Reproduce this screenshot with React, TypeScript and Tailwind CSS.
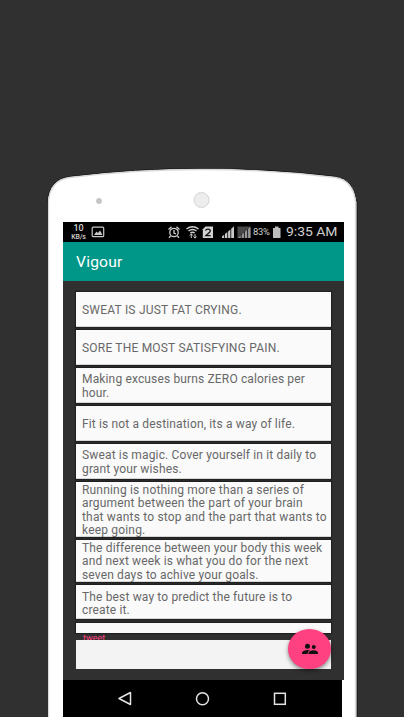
import React from "react";

type Quote = { lines: string[]; box: string };

const quotes: Quote[] = [
  { lines: ["SWEAT IS JUST FAT CRYING."], box: "h-[35px] mb-[3px] pt-[4px] tracking-[0.22px]" },
  { lines: ["SORE THE MOST SATISFYING PAIN."], box: "h-[35px] mb-[3px] pt-[4px] tracking-[0.2px]" },
  { lines: ["Making excuses burns ZERO calories per", "hour."], box: "h-[35px] mb-[3px] pt-[3px] tracking-[0.15px]" },
  { lines: ["Fit is not a destination, its a way of life."], box: "h-[35px] mb-[3px] pt-[4px] tracking-[0.15px]" },
  { lines: ["Sweat is magic. Cover yourself in it daily to", "grant your wishes."], box: "h-[35px] mb-[3px] pt-[3px] tracking-[0.15px]" },
  {
    lines: [
      "Running is nothing more than a series of",
      "argument between the part of your brain",
      "that wants to stop and the part that wants to",
      "keep going.",
    ],
    box: "h-[55px] mb-[3px] pt-[3px] tracking-[0.18px]",
  },
  {
    lines: [
      "The difference between your body this week",
      "and next week is what you do for the next",
      "seven days to achive your goals.",
    ],
    box: "h-[42px] mb-[3px] pt-[3px] tracking-[0.15px]",
  },
  { lines: ["The best way to predict the future is to", "create it."], box: "h-[34px] mb-[4px] pt-[5px] tracking-[0.15px]" },
];

function PhoneShell() {
  return (
    <svg className="absolute left-0 top-0" width="404" height="717" viewBox="0 0 404 717">
      <path d="M47.5 720V202Q49 179 70 176.500Q135 168.500 202 168.500Q269 168.500 335 176.500Q354 179 357 202V720" fill="#fff" stroke="#111" strokeWidth="1" />
      <path d="M48.500 720V202Q50 180 70 177.500Q135 169.500 202 169.500Q269 169.500 335 177.500Q353 180 355.500 202V720" fill="#fff" stroke="#d9d9d9" strokeWidth="1.300" />
      <circle cx="99" cy="201" r="2.900" fill="#c6c6c6" />
      <circle cx="201.500" cy="200" r="7.500" fill="#ededed" stroke="#d4d4d4" />
    </svg>
  );
}

function StatusBar() {
  return (
    <div className="relative flex h-[20px] w-[281px] bg-black text-[#d0d0d0]">
      <div className="ml-[8px] flex w-[15px] flex-col items-center pt-[2px]">
        <span className="text-[9px] leading-[9px] font-medium">10</span>
        <span className="whitespace-nowrap text-[7px] font-medium leading-[8px] tracking-[-0.2px]">KB/s</span>
      </div>
      <svg className="absolute left-0 top-0" width="281" height="20" viewBox="63 222 281 20">
        <rect x="92.200" y="227.200" width="11.500" height="9.500" rx="1" fill="none" stroke="#c8c8c8" strokeWidth="1.200" />
        <path d="M94 235l2.500-3.500 1.500 1.500 2-2.500 2.500 4.500z" fill="#c8c8c8" />
        <g fill="none" stroke="#cfcfcf" strokeWidth="1.300">
          <circle cx="174" cy="232.500" r="4.200" />
          <path d="M174 230v3l2 1M168.500 229.500l3-2.700M179.500 229.500l-3-2.700M170.500 236l-1.500 1.700M177.500 236l1.500 1.700" />
          <path d="M186.500 229Q192.500 224.500 198.500 229M188.500 231Q192.500 228 196.500 231M190.300 233Q192.500 231.500 194.700 233" strokeWidth="1.500" />
          <path d="M191.300 238v-4m-1.500 1.500l1.500-1.700 1.500 1.700M195 234v4m-1.500-1.500l1.500 1.700 1.500-1.700" strokeWidth="1" />
        </g>
        <path d="M205.500 226.500h7.500v11.500h-10.200v-8.800z" fill="#d2d2d2" />
        <path d="M205.500 230.700C206 228.600 210.300 228.600 210.300 231C210.300 232.600 207 234 205.800 235.700H210.700" fill="none" stroke="#111" strokeWidth="1.300" />
        <g fill="#c8c8c8">
          <path d="M222 238v-1.500l2.200-1.800v3.300zM225 238v-4l2.300-2v6zM228.100 238v-6.600l2.300-2v8.600zM231.200 238v-9.300l2.800-2.400v11.700z" />
        </g>
        <path d="M237.500 226.500h13v11.500h-13z" fill="#484848" />
        <path d="M238 238L250.500 227V238z" fill="#999" />
        <path d="M241.200 234v4M244.400 231.500v6.500M247.600 229v9" stroke="#222" strokeWidth="1" />
        <path d="M273 228h2v-1.500h3.500V228h2v10H273z" fill="#bdbdbd" />
      </svg>
      <span className="absolute left-[190px] top-[5px] origin-left scale-x-[1.1] text-[8.5px] leading-[11px] tracking-[-0.2px]">83%</span>
      <span className="absolute left-[223px] top-[2px] origin-left scale-x-[1.07] whitespace-nowrap text-[13px] leading-[16px]">9:35 AM</span>
    </div>
  );
}

function QuoteCard({ lines, box }: Quote) {
  return (
    <div className={`flex w-full shrink-0 flex-col justify-center border-b border-[#d5d8d7] bg-[#fafafa] pl-[6px] text-[12px] leading-[13.3px] text-[#686868] shadow-[0_0_1px_1px_#202020] ${box}`}>
      {lines.map((line) => (
        <div key={line} className="whitespace-nowrap">
          {line}
        </div>
      ))}
    </div>
  );
}

function NavBar() {
  return (
    <div className="h-[37px] w-[279px] bg-black">
      <svg width="279" height="37" viewBox="63 680 279 37" fill="none" stroke="#e4e4e4" strokeWidth="1.500">
        <path d="M130.500 692.500v12l-11.500-6z" strokeLinejoin="round" />
        <circle cx="202.500" cy="698.700" r="6" />
        <rect x="274.500" y="693.300" width="10.800" height="11" />
      </svg>
    </div>
  );
}

export default function App() {
  return (
    <div className="relative h-[717px] w-[404px] overflow-hidden bg-[#303030] font-['Roboto',sans-serif]">
      <PhoneShell />
      <main className="relative ml-[63px] w-[281px] pt-[222px]">
        <StatusBar />
        <header className="flex h-[39px] items-center bg-[#009688] pl-[13px] pt-[2px] text-white">
          <h1 className="origin-left scale-x-[1.04] text-[15px] tracking-[0.2px]">Vigour</h1>
        </header>
        <section className="flex h-[399px] flex-col bg-[#303030] pl-[13px] pr-[13px] pt-[11px]">
          {quotes.map((quote) => (
            <QuoteCard key={quote.lines[0]} {...quote} />
          ))}
          <div className="h-[10px] shrink-0 bg-[#fafafa] shadow-[0_0_1px_1px_#202020]" />
          <div className="h-[7px] shrink-0 overflow-hidden pl-[7px] text-[9px] leading-[11px] text-[#ff4081]">tweet</div>
          <div className="h-[29px] shrink-0 bg-[#f3f3f3]" />
        </section>
        <NavBar />
        <button aria-label="Groups" className="absolute left-[225px] top-[629px] flex h-[40px] w-[43px] items-center justify-center rounded-[50%] bg-[#ff4081] shadow-[0_2px_4px_rgba(0,0,0,0.45)]">
          <svg width="16" height="12" viewBox="0 0 16 12" fill="#101010">
            <circle cx="5.500" cy="3.200" r="2.500" />
            <circle cx="11.800" cy="4" r="2" />
            <path d="M0 11V9.500Q1 7 6 7L8 7.300Q5.500 8.500 5.500 11zM6.500 11V9.700Q7.500 7.500 11.500 7.300Q15.500 7.500 16 9.700V11z" />
          </svg>
        </button>
      </main>
    </div>
  );
}
